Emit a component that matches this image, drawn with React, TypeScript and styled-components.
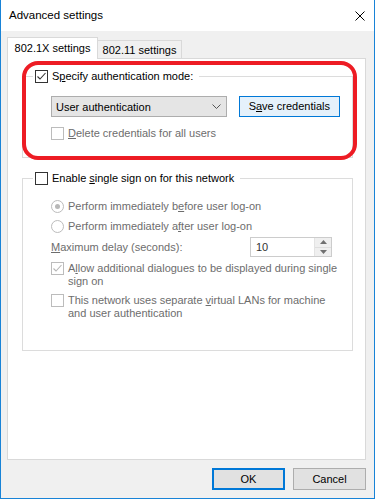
import React from "react"
import styled, { createGlobalStyle } from "styled-components"

const GlobalStyle = createGlobalStyle`
  html, body {
    margin: 0;
    padding: 0;
    background: #fff;
  }
  body {
    font-family: "Segoe UI", "Liberation Sans", Arial, sans-serif;
    font-size: 11px;
    color: #000;
  }
`;

const Window = styled.div`
    width: 375px;
    height: 499px;
    box-sizing: border-box;
    border: 1px solid #1883d7;
    border-top: none;
    background: #f0f0f0;
    display: flex;
    flex-direction: column;
`;

const TitleBar = styled.div`
    height: 31px;
    flex-shrink: 0;
    background: #fff;
    display: flex;
    align-items: center;
    justify-content: space-between;
    padding: 0 9px 0 8px;
`;

const Title = styled.span`
    font-size: 11.5px;
    line-height: 15px;
`;

const Body = styled.div`
    padding: 7px 8px 0 6px;
    display: flex;
    flex-direction: column;
`;

const TabStrip = styled.div`
    height: 21px;
    display: flex;
    align-items: flex-end;
    margin-bottom: -1px;
    position: relative;
    z-index: 1;
`;

const Tab = styled.div<{ $active?: boolean; $width: number }>`
    box-sizing: border-box;
    width: ${p => p.$width}px;
    height: ${p => (p.$active ? "22px" : "18px")};
    margin-bottom: ${p => (p.$active ? "0" : "1px")};
    padding-top: ${p => (p.$active ? "3px" : "2px")};
    background: ${p => (p.$active ? "#fff" : "#f0f0f0")};
    border: 1px solid #d9d9d9;
    border-bottom: none;
    border-left: ${p => (p.$active ? "1px solid #d9d9d9" : "none")};
    line-height: 15px;
    text-align: center;
    white-space: nowrap;
`;

const Panel = styled.div`
    position: relative;
    box-sizing: border-box;
    width: 359px;
    height: 402px;
    background: #fff;
    border: 1px solid #d9d9d9;
    padding: 10px 12px 0 14px;
`;

const Highlight = styled.div`
    position: absolute;
    left: 14px;
    top: 2px;
    width: 335px;
    height: 99px;
    box-sizing: border-box;
    border: 4px solid #ed1c24;
    border-radius: 16px;
    pointer-events: none;
`;

const Group = styled.fieldset<{ $pad: string }>`
    margin: 0;
    min-width: 0;
    border: 1px solid #dcdcdc;
    padding: ${p => p.$pad};
    & + & {
        margin-top: 13px;
    }
`;

const Legend = styled.legend`
    margin-left: 0;
    padding: 0 6px 0 2px;
    height: 14px;
    display: flex;
    align-items: center;
    gap: 4px;
    line-height: 14px;
`;

const Content = styled.div`
    padding-left: 18px;
    display: flex;
    flex-direction: column;
`;

const Option = styled.div<{ $top?: number }>`
    display: flex;
    align-items: flex-start;
    gap: 4px;
    margin-top: ${p => p.$top ?? 0}px;
`;

const Label = styled.span<{ $disabled?: boolean }>`
    line-height: 13px;
    color: ${p => (p.$disabled ? "#6d6d6d" : "#000")};
    white-space: nowrap;
`;

const Key = styled.span`
    text-decoration: underline;
`;

const Box = styled.span<{ $disabled?: boolean }>`
    flex-shrink: 0;
    box-sizing: border-box;
    width: 13px;
    height: 13px;
    border: 1px solid ${p => (p.$disabled ? "#bcbcbc" : "#333")};
    background: #fff;
    display: flex;
    align-items: center;
    justify-content: center;
`;

const Round = styled(Box)`
    border-radius: 50%;
`;

const Dot = styled.span`
    width: 5px;
    height: 5px;
    border-radius: 50%;
    background: #b8b8b8;
`;

const ComboRow = styled.div`
    display: flex;
    gap: 12px;
    height: 21px;
`;

const Combo = styled.div`
    box-sizing: border-box;
    width: 180px;
    height: 21px;
    background: #e5e5e5;
    border: 1px solid #adadad;
    display: flex;
    align-items: center;
    justify-content: space-between;
    padding: 0 5px 0 4px;
`;

const Button = styled.div<{ $variant?: "focus" | "default" }>`
    box-sizing: border-box;
    height: ${p => (p.$variant === "focus" ? "21px" : "22px")};
    width: ${p => (p.$variant === "focus" ? "104px" : "73px")};
    display: flex;
    align-items: center;
    justify-content: center;
    background: ${p => (p.$variant === "focus" ? "#e5f1fb" : "#e1e1e1")};
    border: ${p =>
        p.$variant === "focus"
            ? "1px solid #0078d7"
            : p.$variant === "default"
            ? "2px solid #0078d7"
            : "1px solid #adadad"};
    line-height: 15px;
`;

const DelayRow = styled.div`
    display: grid;
    grid-template-columns: 199px 82px;
    align-items: center;
    margin-top: 4px;
`;

const Spin = styled.div`
    box-sizing: border-box;
    height: 20px;
    border: 1px solid #cccccc;
    display: flex;
`;

const SpinValue = styled.span`
    flex: 1;
    padding-left: 5px;
    line-height: 18px;
    color: #333;
`;

const SpinButtons = styled.div`
    width: 16px;
    display: flex;
    flex-direction: column;
    border-left: 1px solid #e3e3e3;
`;

const SpinHalf = styled.div`
    flex: 1;
    background: #efefef;
    display: flex;
    align-items: center;
    justify-content: center;
    & + & {
        border-top: 1px solid #dedede;
    }
`;

const Footer = styled.div`
    display: flex;
    justify-content: flex-end;
    gap: 8px;
    margin-top: 8px;
`;

const Check: React.FC<{ checked?: boolean; disabled?: boolean }> = ({ checked, disabled }) => (
    <Box $disabled={disabled}>
        {checked && (
            <svg width="11" height="11" viewBox="0 0 11 11">
                <polyline
                    points="1.5,5.5 4,8 9.5,2"
                    fill="none"
                    stroke={disabled ? "#b5b5b5" : "#333"}
                    strokeWidth="1.1"
                />
            </svg>
        )}
    </Box>
);

const Radio: React.FC<{ checked?: boolean }> = ({ checked }) => (
    <Round $disabled>{checked && <Dot />}</Round>
);

const App: React.FC = () => {
    return (
        <>
            <GlobalStyle />
            <Window>
                <TitleBar>
                    <Title>Advanced settings</Title>
                    <svg width="10" height="10" viewBox="0 0 10 10">
                        <path d="M0.5 0.5 L9.5 9.5 M9.5 0.5 L0.5 9.5" stroke="#000" strokeWidth="1" />
                    </svg>
                </TitleBar>
                <Body>
                    <TabStrip>
                        <Tab $active $width={91}>802.1X settings</Tab>
                        <Tab $width={84}>802.11 settings</Tab>
                    </TabStrip>
                    <Panel>
                        <Group $pad="13px 12px 17px 10px">
                            <Legend>
                                <Check checked />
                                <Label>S<Key>p</Key>ecify authentication mode:</Label>
                            </Legend>
                            <Content>
                                <ComboRow>
                                    <Combo>
                                        <span>User authentication</span>
                                        <svg width="9" height="6" viewBox="0 0 9 6">
                                            <polyline points="0.5,0.5 4.5,4.5 8.5,0.5" fill="none" stroke="#555" strokeWidth="1" />
                                        </svg>
                                    </Combo>
                                    <Button $variant="focus">S<Key>a</Key>ve credentials</Button>
                                </ComboRow>
                                <Option $top={10}>
                                    <Check disabled />
                                    <Label $disabled><Key>D</Key>elete credentials for all users</Label>
                                </Option>
                            </Content>
                        </Group>
                        <Group $pad="15px 12px 30px 10px">
                            <Legend>
                                <Check />
                                <Label>Enable <Key>s</Key>ingle sign on for this network</Label>
                            </Legend>
                            <Content>
                                <Option>
                                    <Radio checked />
                                    <Label $disabled>Perform immediately b<Key>e</Key>fore user log-on</Label>
                                </Option>
                                <Option $top={7}>
                                    <Radio />
                                    <Label $disabled>Perform immediately a<Key>f</Key>ter user log-on</Label>
                                </Option>
                                <DelayRow>
                                    <Label $disabled><Key>M</Key>aximum delay (seconds):</Label>
                                    <Spin>
                                        <SpinValue>10</SpinValue>
                                        <SpinButtons>
                                            <SpinHalf>
                                                <svg width="7" height="4" viewBox="0 0 7 4">
                                                    <polygon points="3.5,0 7,4 0,4" fill="#707070" />
                                                </svg>
                                            </SpinHalf>
                                            <SpinHalf>
                                                <svg width="7" height="4" viewBox="0 0 7 4">
                                                    <polygon points="0,0 7,0 3.5,4" fill="#707070" />
                                                </svg>
                                            </SpinHalf>
                                        </SpinButtons>
                                    </Spin>
                                </DelayRow>
                                <Option $top={5}>
                                    <Check checked disabled />
                                    <Label $disabled>
                                        A<Key>l</Key>low additional dialogues to be displayed during single
                                        <br />
                                        sign on
                                    </Label>
                                </Option>
                                <Option $top={6}>
                                    <Check disabled />
                                    <Label $disabled>
                                        This network uses separate <Key>v</Key>irtual LANs for machine
                                        <br />
                                        and user authentication
                                    </Label>
                                </Option>
                            </Content>
                        </Group>
                        <Highlight />
                    </Panel>
                    <Footer>
                        <Button $variant="default">OK</Button>
                        <Button>Cancel</Button>
                    </Footer>
                </Body>
            </Window>
        </>
    )
}

export default App;
